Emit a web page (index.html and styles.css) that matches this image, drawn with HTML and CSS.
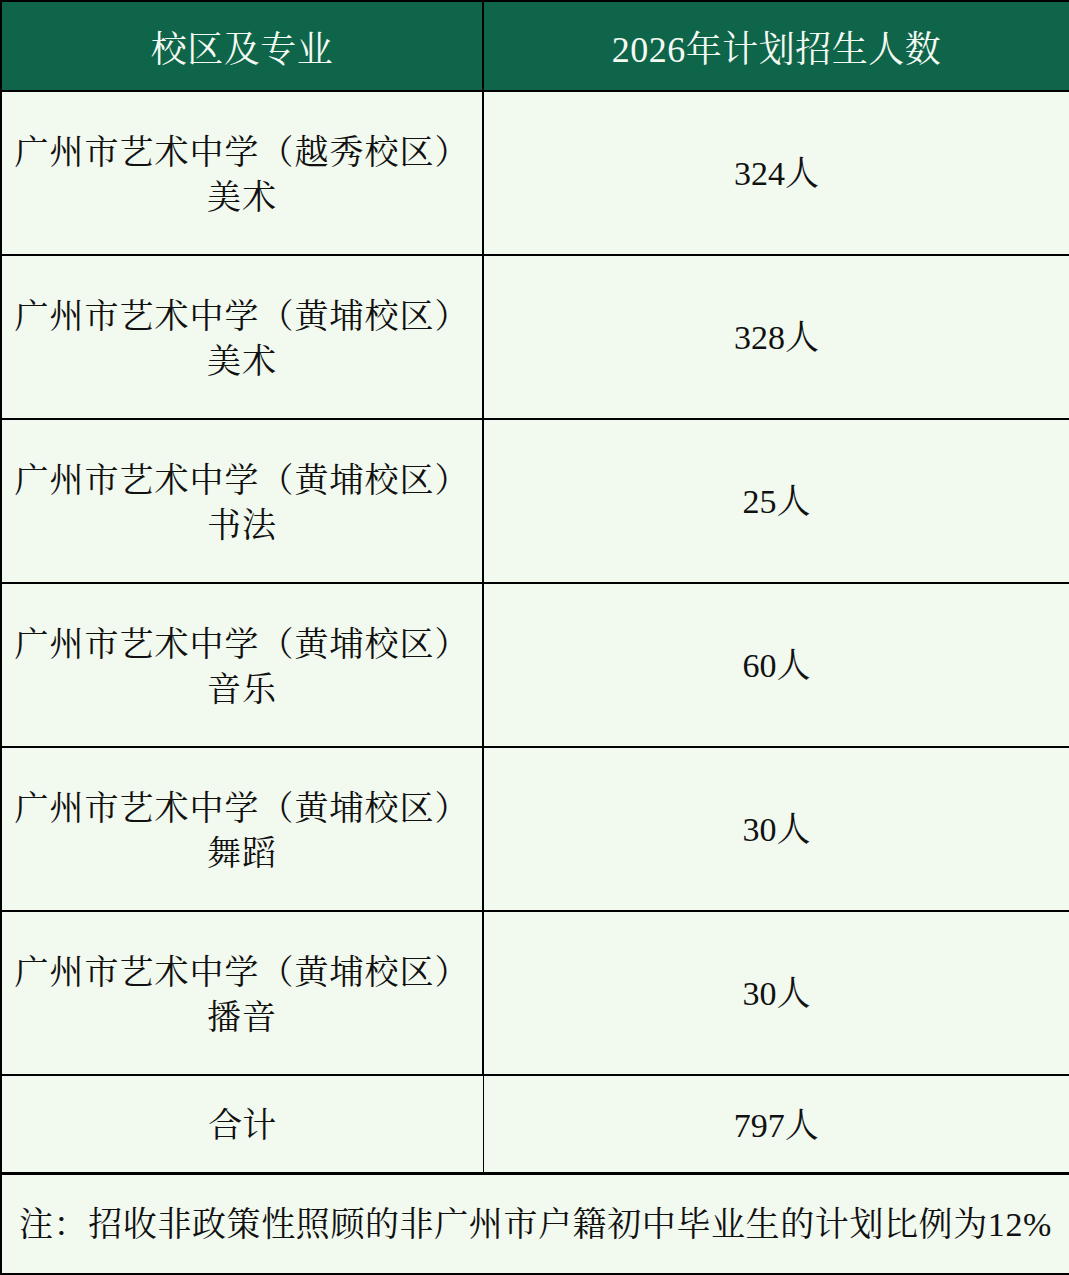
FILE: index.html
```html
<!DOCTYPE html>
<html lang="zh-CN">
<head>
<meta charset="utf-8">
<title>招生计划</title>
<link rel="stylesheet" href="styles.css">
</head>
<body>
<table class="plan">
  <colgroup><col class="c1"><col class="c2"></colgroup>
  <thead>
    <tr class="head"><th>校区及专业</th><th>2026年计划招生人数</th></tr>
  </thead>
  <tbody>
    <tr class="row"><td class="name">广州市艺术中学（越秀校区）<br>美术</td><td class="num">324人</td></tr>
    <tr class="row"><td class="name">广州市艺术中学（黄埔校区）<br>美术</td><td class="num">328人</td></tr>
    <tr class="row"><td class="name">广州市艺术中学（黄埔校区）<br>书法</td><td class="num">25人</td></tr>
    <tr class="row"><td class="name">广州市艺术中学（黄埔校区）<br>音乐</td><td class="num">60人</td></tr>
    <tr class="row"><td class="name">广州市艺术中学（黄埔校区）<br>舞蹈</td><td class="num">30人</td></tr>
    <tr class="row"><td class="name">广州市艺术中学（黄埔校区）<br>播音</td><td class="num">30人</td></tr>
    <tr class="total"><td class="name t1">合计</td><td class="num t2">797人</td></tr>
    <tr class="note"><td colspan="2">注：招收非政策性照顾的非广州市户籍初中毕业生的计划比例为12%</td></tr>
  </tbody>
</table>
</body>
</html>
```
FILE: styles.css
```css
html, body {
  margin: 0;
  padding: 0;
  background: #f2f9ef;
}
.plan {
  width: 1069px;
  border-collapse: collapse;
  table-layout: fixed;
  font-family: "Liberation Serif", "Noto Serif CJK SC", "Noto Sans CJK SC", serif;
  font-size: 34px;
  color: #111;
  background: #f2f9ef;
}
.c1 { width: 482px; }
.c2 { width: 587px; }
.plan th, .plan td {
  border: 2px solid #000;
  padding: 0;
  text-align: center;
  vertical-align: middle;
  font-weight: normal;
  line-height: 45px;
}
.head th {
  height: 80px;
  padding-top: 8px;
  background: #0f654a;
  color: #f4faf2;
  font-size: 36px;
  letter-spacing: 0.5px;
}
.row td { height: 162px; }
.row .name { letter-spacing: 1px; padding-top: 3px; height: 159px; }
.total td { height: 93px; padding-top: 3px; }
.total .t1 { border-right: 1px solid #000; }
.total .t2 { border-left: 1px solid #000; }
.total td { border-bottom-width: 3px; }
.note td {
  height: 98px;
  text-align: left;
  padding-left: 17px;
  letter-spacing: 0.6px;
  white-space: nowrap;
}
```
